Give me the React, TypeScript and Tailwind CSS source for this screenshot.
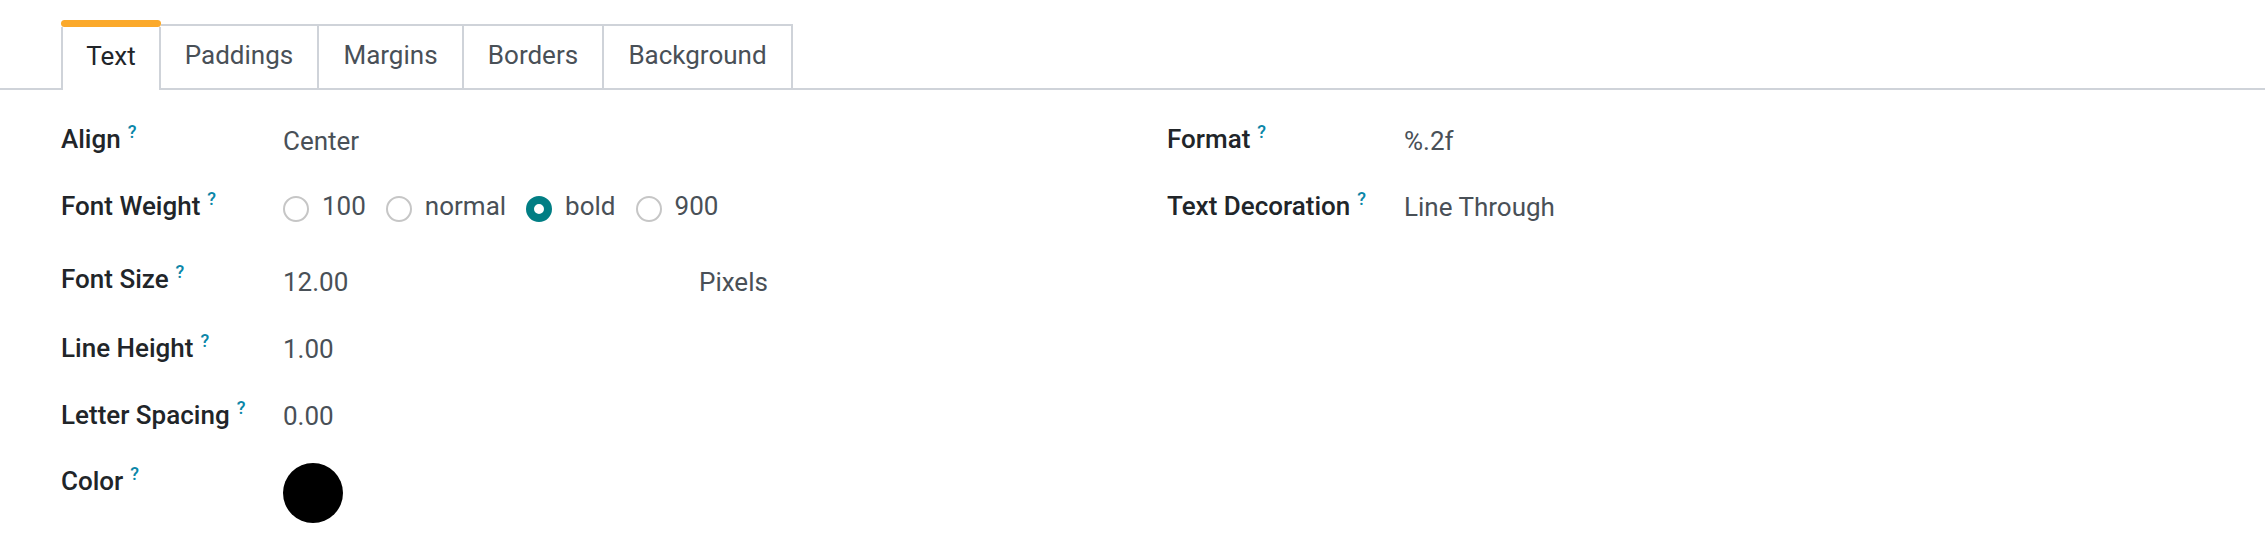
import { ReactNode } from "react";

const tabs = ["Text", "Paddings", "Margins", "Borders", "Background"];
const tabWidths: Record<string, string> = {
  Text: "w-[100px]",
  Paddings: "w-[160px]",
  Margins: "w-[147px]",
  Borders: "w-[142px]",
  Background: "w-[191px]",
};

const Help = () => (
  <span className="relative -top-[10px] ml-[7px] text-[18px] leading-none font-medium text-[#0b86a8]">
    ?
  </span>
);

const Row = ({
  label,
  height,
  labelWidth,
  children,
}: {
  label: string;
  height: string;
  labelWidth: string;
  children: ReactNode;
}) => (
  <div className={`flex ${height}`}>
    <div className={`${labelWidth} shrink-0 font-medium text-[#212529]`}>
      {label}
      <Help />
    </div>
    <div className="flex-1 text-[#495057]">{children}</div>
  </div>
);

const Radio = ({ label, checked }: { label: string; checked?: boolean }) => (
  <div className="mr-[20px] flex items-start">
    {checked ? (
      <span className="mt-[9px] box-border h-[26px] w-[26px] rounded-full border-[8px] border-[#017e84] bg-white" />
    ) : (
      <span className="mt-[9px] box-border h-[26px] w-[26px] rounded-full border-2 border-[#c6c6c6] bg-white" />
    )}
    <span className="ml-[13px]">{label}</span>
  </div>
);

export default function App() {
  return (
    <div className="h-[556px] w-full bg-white font-['Roboto','Liberation_Sans',sans-serif] text-[26px] leading-[39px]">
      {/* notebook tabs */}
      <div className="flex items-end border-b-2 border-[#cfd3d9] pt-[20px] pl-[61px]">
        {tabs.map((tab, i) =>
          i === 0 ? (
            <div
              key={tab}
              className={`${tabWidths[tab]} relative z-10 -mb-[2px] flex h-[70px] flex-col bg-white`}
            >
              <div className="h-[7px] rounded-[4px] bg-[#fba92a]" />
              <div className="flex flex-1 items-center justify-center border-x-2 border-[#cfd3d9] pb-[5px] text-[#212529]">
                {tab}
              </div>
            </div>
          ) : (
            <div
              key={tab}
              className={`${tabWidths[tab]} -ml-[2px] flex h-[64px] items-center justify-center border-x-2 border-t-2 border-[#cfd3d9] pb-[4px] text-[#495057]`}
            >
              {tab}
            </div>
          ),
        )}
      </div>

      {/* form groups */}
      <div className="flex pt-[30px] pl-[61px]">
        <div className="w-[1106px] shrink-0">
          <Row label="Align" height="h-[67px]" labelWidth="w-[222px]">
            <div className="pt-[2px]">Center</div>
          </Row>
          <Row label="Font Weight" height="h-[73px]" labelWidth="w-[222px]">
            <div className="flex">
              <Radio label="100" />
              <Radio label="normal" />
              <Radio label="bold" checked />
              <Radio label="900" />
            </div>
          </Row>
          <Row label="Font Size" height="h-[69px]" labelWidth="w-[222px]">
            <div className="flex pt-[3px]">
              <span className="w-[416px]">12.00</span>
              <span>Pixels</span>
            </div>
          </Row>
          <Row label="Line Height" height="h-[67px]" labelWidth="w-[222px]">
            <div className="pt-[1px]">1.00</div>
          </Row>
          <Row label="Letter Spacing" height="h-[66px]" labelWidth="w-[222px]">
            <div className="pt-[1px]">0.00</div>
          </Row>
          <Row label="Color" height="h-[66px]" labelWidth="w-[222px]">
            <div className="mt-[1px] h-[60px] w-[60px] rounded-full bg-black" />
          </Row>
        </div>
        <div className="flex-1">
          <Row label="Format" height="h-[67px]" labelWidth="w-[237px]">
            <div className="pt-[2px]">%.2f</div>
          </Row>
          <Row label="Text Decoration" height="h-[73px]" labelWidth="w-[237px]">
            <div className="pt-[1px]">Line Through</div>
          </Row>
        </div>
      </div>
    </div>
  );
}
